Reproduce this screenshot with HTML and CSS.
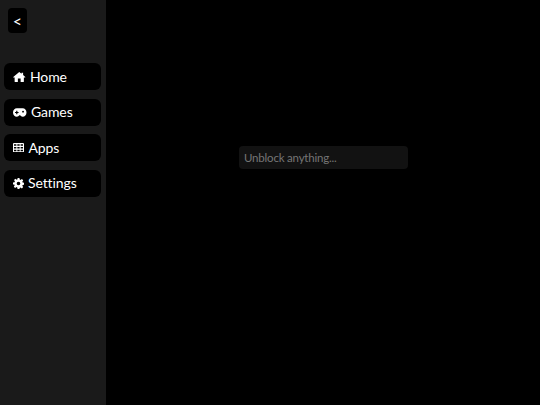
FILE: index.html
```html
<!DOCTYPE html>
<html lang="en">
<head>
<meta charset="utf-8">
<title>Unblock</title>
<link rel="stylesheet" href="styles.css">
</head>
<body>
<div class="app">
  <aside class="sidebar">
    <button class="back">&lt;</button>
    <nav class="nav">
      <a class="item item-home">
        <svg class="icon icon-home" viewBox="0 0 16 13"><path fill="#fff" d="M8 0 .2 6.400c-.3.300-.1.800.3.800H2v5c0 .4.300.8.800.8h3.400V8.500h3.600V13h3.400c.5 0 .8-.4.800-.8v-5h1.500c.4 0 .6-.5.300-.8L13 3.900V1h-2v1.300z"/></svg>
        <span>Home</span>
      </a>
      <a class="item item-games">
        <svg class="icon icon-games" viewBox="0 0 16 10"><path fill="#fff" fill-rule="evenodd" d="M4.600 0h6.800C14 0 16 2.200 16 5s-2 5-4.600 5c-1.300 0-2.200-.7-2.900-1.600h-1C6.800 9.300 5.900 10 4.600 10 2 10 0 7.800 0 5s2-5 4.600-5zM3.800 2.800v1.500H2.400v1.400h1.400v1.500h1.400V5.700h1.400V4.300H5.200V2.800zM11.900 2.900a1.100 1.100 0 1 0 0 2.200 1.100 1.100 0 0 0 0-2.200z"/></svg>
        <span>Games</span>
      </a>
      <a class="item item-apps">
        <svg class="icon icon-apps" viewBox="0 0 14 12"><path fill="#fff" fill-rule="evenodd" d="M1.200 0h11.600c.7 0 1.200.5 1.200 1.200v9.600c0 .7-.5 1.200-1.200 1.200H1.200C.5 12 0 11.500 0 10.800V1.200C0 .5.500 0 1.200 0zM1.300 1.400v2.200h3V1.400zm4.200 0v2.200h3V1.400zm4.200 0v2.200h3V1.400zM1.300 4.900v2.200h3V4.900zm4.200 0v2.200h3V4.900zm4.200 0v2.200h3V4.900zM1.300 8.400v2.200h3V8.400zm4.200 0v2.200h3V8.400zm4.200 0v2.200h3V8.400z"/></svg>
        <span>Apps</span>
      </a>
      <a class="item item-settings">
        <svg class="icon icon-gear" viewBox="0 0 24 24"><path fill="#fff" fill-rule="evenodd" d="M10 0h4l.7 3.400 1.800.8 2.900-1.900 2.800 2.800-1.900 2.900.8 1.800 3.400.7v4l-3.400.7-.8 1.800 1.900 2.900-2.800 2.800-2.900-1.900-1.800.8L14 24h-4l-.7-3.400-1.800-.8-2.900 1.900-2.800-2.800 1.900-2.900-.8-1.800L0 14v-4l3.400-.7.800-1.800-1.900-2.900 2.800-2.800 2.900 1.900 1.800-.8zM12 8a4 4 0 1 0 0 8 4 4 0 0 0 0-8z"/></svg>
        <span>Settings</span>
      </a>
    </nav>
  </aside>
  <main class="main">
    <input class="search" type="text" placeholder="Unblock anything...">
  </main>
</div>
</body>
</html>
```
FILE: styles.css
```css
* { box-sizing: border-box; }
html, body { margin: 0; height: 100%; background: #000; }
body { font-family: Lato, "Noto Sans", sans-serif; color: #fff; overflow: hidden; }
.app { display: flex; height: 405px; }
.sidebar { width: 106px; flex: none; background: #1a1a1a; padding: 8px 5px 0 4px; }
.back {
  display: block; width: 19px; height: 25px; margin-left: 4px; padding: 0;
  background: #000; color: #fff; border: 0; border-radius: 4px;
  font: 16px Lato, "Noto Sans", sans-serif;
}
.nav { display: flex; flex-direction: column; gap: 8.5px; margin-top: 30px; }
.item {
  display: flex; align-items: center; height: 27px; padding-left: 9px; gap: 5px;
  background: #000; border-radius: 6px; font-size: 14px; letter-spacing: -.1px; line-height: 1;
}
.icon { flex: none; display: block; }
.icon-home { width: 12.5px; height: 10px; }
.icon-games { width: 13.5px; height: 9px; }
.icon-apps { width: 11px; height: 9.5px; }
.icon-gear { width: 11px; height: 11px; }
.item-home { gap: 4.5px; }
.item-games { gap: 4.5px; }
.item-apps { gap: 4.5px; }
.item-settings { gap: 4px; }
.main { flex: 1; display: flex; justify-content: center; padding-top: 146px; padding-left: 1px; }
.search {
  width: 169px; height: 23px; padding: 0 5px; background: #121212; border: 0; border-radius: 4px;
  color: #fff; font: 11.5px Lato, "Noto Sans", sans-serif; letter-spacing: -.2px; outline: none;
}
.search::placeholder { color: #757575; opacity: 1; }
```
